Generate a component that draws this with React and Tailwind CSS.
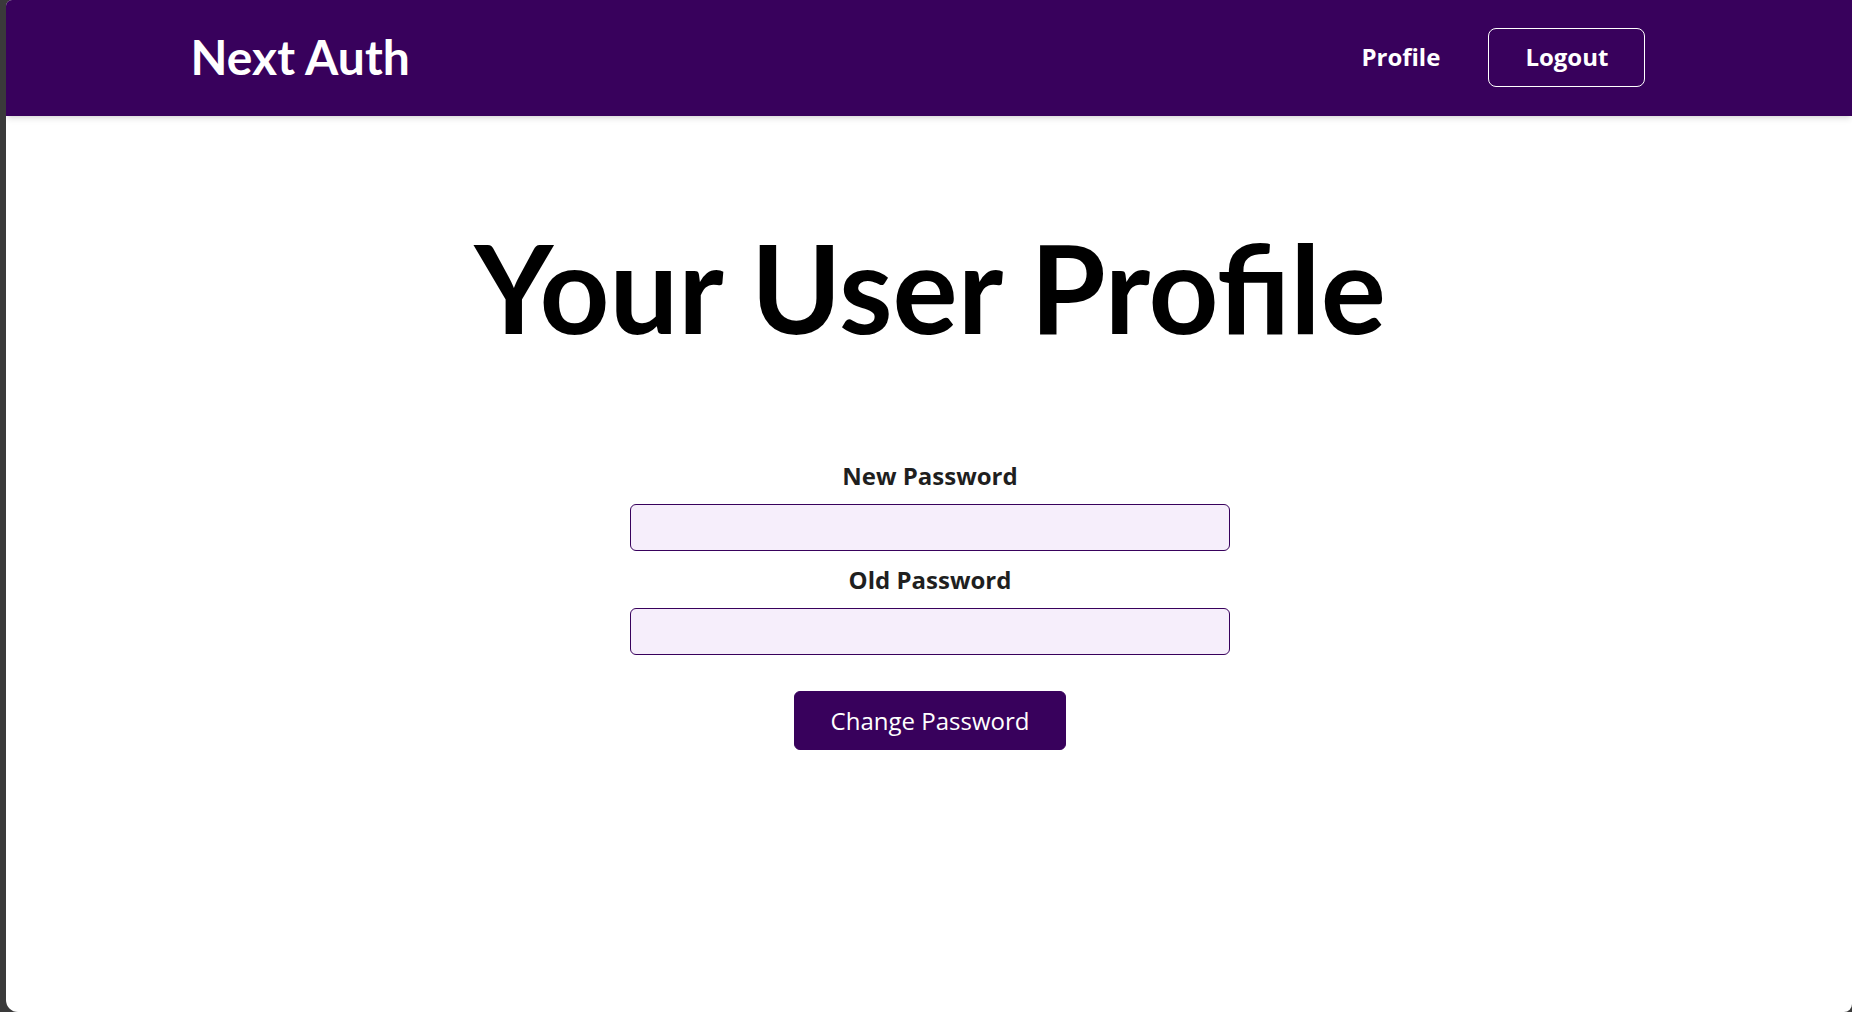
export default function App() {
  const label = "mt-2.5 block text-2xl leading-[37px] font-bold text-[#1f1f1f]";
  const field =
    "mt-2.5 block h-[47px] w-full rounded-md border border-[#38015c] bg-[#f6eefb] px-1 text-2xl text-[#1f1f1f] outline-none";
  return (
    <div className="min-h-screen bg-[#3a3a3a] pl-1.5 font-['Open_Sans',sans-serif]">
      <div className="min-h-screen overflow-hidden rounded-tl-md rounded-br-lg rounded-bl-xl bg-white">
        <header className="flex h-29 items-center justify-between bg-[#38015c] px-[10%] pb-0.5 shadow-md">
          <a href="#" className="font-['Lato',sans-serif] text-5xl font-bold text-white">
            Next Auth
          </a>
          <nav className="mr-[22px] flex items-center gap-12 text-2xl font-bold text-white">
            <a href="#profile">Profile</a>
            <button type="button" className="h-[59px] rounded-lg border border-white px-9">
              Logout
            </button>
          </nav>
        </header>
        <main className="pt-24 pl-0.5 text-center">
          <h1 className="font-['Lato',sans-serif] text-[122px] leading-[151px] font-bold text-black">
            Your User Profile
          </h1>
          <form className="mx-auto mt-[94px] w-full max-w-[600px]">
            <label htmlFor="new-password" className={label}>
              New Password
            </label>
            <input id="new-password" type="password" className={field} />
            <label htmlFor="old-password" className={label}>
              Old Password
            </label>
            <input id="old-password" type="password" className={field} />
            <button
              type="button"
              className="mt-9 h-[59px] rounded-md border border-[#38015c] bg-[#38015c] px-9 text-2xl text-white"
            >
              Change Password
            </button>
          </form>
        </main>
      </div>
    </div>
  );
}
